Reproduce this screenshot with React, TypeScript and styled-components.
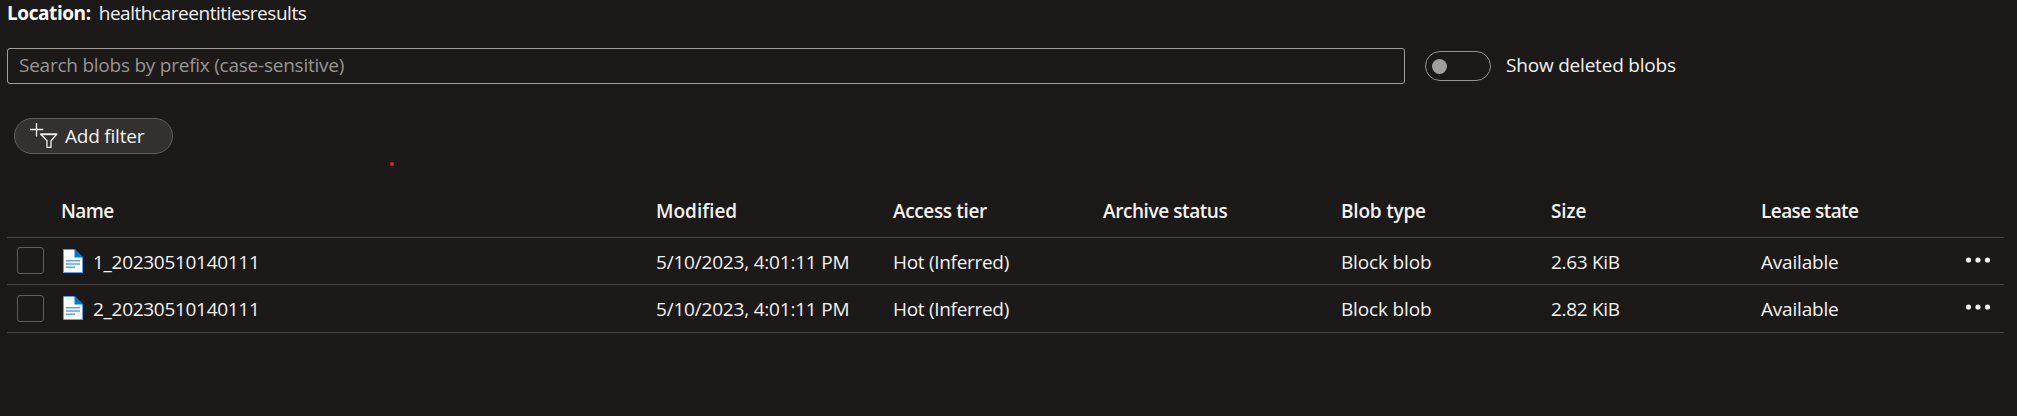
import React from "react";
import styled, { createGlobalStyle } from "styled-components";

const GlobalStyle = createGlobalStyle`
  * { box-sizing: border-box; }
  body {
    margin: 0;
    background: #1b1a19;
    color: #f3f2f1;
    font: 400 19px/26px "Open Sans", "Noto Sans", sans-serif;
  }
`;

const Page = styled.main`
  position: relative;
  display: flex;
  flex-direction: column;
  height: 416px;
  padding: 0 13px 0 7px;
  overflow: hidden;
`;

const Label = styled.span<{ $track?: number }>`
  letter-spacing: ${(p) => p.$track ?? 0}px;
  white-space: nowrap;
`;

const Location = styled.div`
  display: flex;
  gap: 8px;
  height: 48px;
`;

const LocationKey = styled(Label)`
  font-weight: 700;
  color: #ffffff;
`;

const SearchRow = styled.div`
  display: flex;
  align-items: center;
  height: 36px;
`;

const SearchBox = styled.div`
  display: flex;
  align-items: center;
  width: 1398px;
  height: 36px;
  padding: 0 11px 3px;
  border: 1px solid #a19f9d;
  border-radius: 3px;
  color: #979593;
`;

const Toggle = styled.div`
  display: flex;
  align-items: center;
  width: 66px;
  height: 30px;
  margin: 0 15px 0 20px;
  padding-left: 6px;
  border: 1px solid #979593;
  border-radius: 15px;
`;

const Knob = styled.span`
  width: 15px;
  height: 15px;
  border-radius: 50%;
  background: #a19f9d;
`;

const ToggleText = styled(Label)`
  padding-bottom: 3px;
`;

const FilterButton = styled.button`
  display: flex;
  align-items: center;
  width: 159px;
  height: 36px;
  margin: 34px 0 0 7px;
  padding: 0 0 0 14px;
  border: 1px solid #605e5c;
  border-radius: 18px;
  background: #323130;
  color: inherit;
  font: inherit;
  text-align: left;
`;

const FilterIcon = styled.svg`
  width: 30px;
  height: 28px;
  margin-right: 6px;
  fill: none;
  stroke: #f3f2f1;
`;

const Table = styled.section`
  display: flex;
  flex-direction: column;
  margin-top: 30px;
`;

const Row = styled.div<{ $height: number }>`
  display: grid;
  grid-template-columns: 54px 595px 237px 210px 238px 210px 210px 204px 1fr;
  height: ${(p) => p.$height}px;
  border-bottom: 1px solid #484644;
`;

const HeaderCell = styled(Label)`
  padding-top: 14px;
  font-weight: 600;
`;

const Cell = styled(Label)`
  padding-top: 11px;
`;

const NameCell = styled.div`
  display: flex;
  gap: 10px;
`;

const Checkbox = styled.span<{ $top: number }>`
  width: 27px;
  height: 27px;
  margin: ${(p) => p.$top}px 0 0 10px;
  border: 1px solid #605e5c;
  border-radius: 3px;
`;

const FileIcon = styled.svg`
  width: 20px;
  height: 24px;
  margin: 11px 0 0 2px;
`;

const MenuIcon = styled.svg`
  width: 26px;
  height: 6px;
  margin-top: 19px;
  fill: #f3f2f1;
`;

const RedDot = styled.span`
  position: absolute;
  left: 390px;
  top: 162px;
  width: 4px;
  height: 4px;
  border-radius: 50%;
  background: #e81b23;
`;

const columns: [string, number][] = [
  ["Name", -0.6],
  ["Modified", 0],
  ["Access tier", -0.36],
  ["Archive status", -0.42],
  ["Blob type", -0.2],
  ["Size", -0.1],
  ["Lease state", -0.57],
];

const blobs = [
  { name: "1_20230510140111", size: "2.63 KiB", height: 47, boxTop: 9 },
  { name: "2_20230510140111", size: "2.82 KiB", height: 48, boxTop: 10 },
];

function Document() {
  return (
    <FileIcon viewBox="0 0 20 24">
      <path d="M0 0H12L20 8V24H0Z" fill="#0078d4" />
      <path d="M1 1H11.5V8.5H19V23H1Z" fill="#ffffff" />
      <path d="M.5 .5H11M.5 .5V23.5H19.5V9" fill="none" stroke="#5ea0ef" />
      <path d="M3 11.7H17M3 15H17M3 18.3H12" stroke="#5ea0ef" strokeWidth="1.6" />
    </FileIcon>
  );
}

export default function App() {
  return (
    <>
      <GlobalStyle />
      <Page>
        <Location>
          <LocationKey $track={-0.42}>Location:</LocationKey>
          <Label $track={-0.46}>healthcareentitiesresults</Label>
        </Location>
        <SearchRow>
          <SearchBox>
            <Label $track={-0.24}>Search blobs by prefix (case-sensitive)</Label>
          </SearchBox>
          <Toggle><Knob /></Toggle>
          <ToggleText $track={-0.2}>Show deleted blobs</ToggleText>
        </SearchRow>
        <FilterButton>
          <FilterIcon viewBox="0 0 30 28">
            <path d="M1 7.5H14.3M7.5 1V14.5" strokeWidth="1.3" />
            <path d="M12 12.3H27.5L22 18.8V25.3H18V18.8Z" strokeWidth="1.3" />
            <path d="M11.3 12.3H28" strokeWidth="1.8" />
          </FilterIcon>
          <Label $track={-0.22}>Add filter</Label>
        </FilterButton>
        <Table>
          <Row $height={54}>
            <span />
            {columns.map(([title, track]) => (
              <HeaderCell key={title} $track={track}>{title}</HeaderCell>
            ))}
          </Row>
          {blobs.map((b) => (
            <Row key={b.name} $height={b.height}>
              <Checkbox $top={b.boxTop} />
              <NameCell>
                <Document />
                <Cell $track={-0.3}>{b.name}</Cell>
              </NameCell>
              <Cell $track={-0.2}>5/10/2023, 4:01:11 PM</Cell>
              <Cell $track={-0.3}>Hot (Inferred)</Cell>
              <span />
              <Cell $track={-0.15}>Block blob</Cell>
              <Cell $track={-0.3}>{b.size}</Cell>
              <Cell $track={-0.2}>Available</Cell>
              <MenuIcon viewBox="0 0 26 6">
                <circle cx="3.5" cy="3" r="2.6" />
                <circle cx="13" cy="3" r="2.6" />
                <circle cx="22.5" cy="3" r="2.6" />
              </MenuIcon>
            </Row>
          ))}
        </Table>
        <RedDot />
      </Page>
    </>
  );
}
